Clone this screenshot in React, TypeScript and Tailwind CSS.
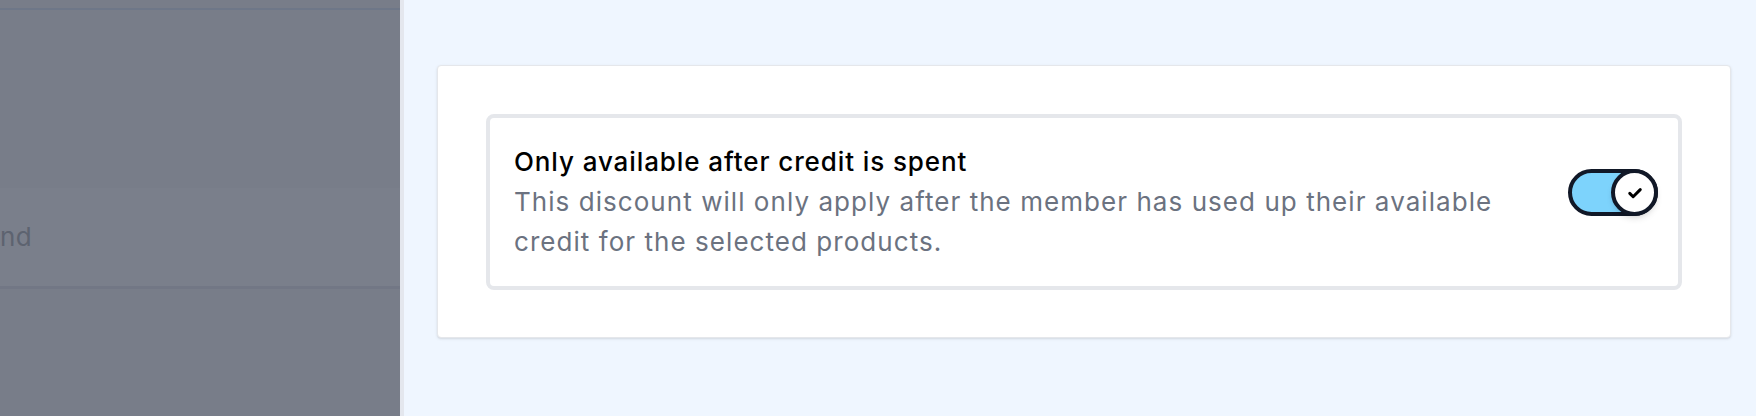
import React from 'react';

function Toggle({ on }: { on: boolean }) {
  return (
    <div
      className={`relative w-[90px] h-[47px] rounded-full border-4 border-[#111827] shrink-0 ${
        on ? 'bg-[#7dd3fc]' : 'bg-gray-200'
      }`}
    >
      <div className="absolute -right-[4px] -top-[4px] w-[47px] h-[47px] rounded-full border-4 border-[#111827] bg-white shadow-md flex items-center justify-center">
        <svg className="w-[18px] h-[18px]" viewBox="0 0 24 24" fill="none" stroke="#000" strokeWidth={4} strokeLinecap="round" strokeLinejoin="round">
          <path d="M5 12.5l4.5 4.5L19 7.5" />
        </svg>
      </div>
    </div>
  );
}

export default function App() {
  const [enabled] = React.useState(true);

  return (
    <div className="flex w-full h-[416px] overflow-hidden font-['Inter',sans-serif]">
      {/* Dimmed sidebar behind the overlay */}
      <div className="w-[400px] shrink-0 bg-[#787d89] flex flex-col">
        <div className="h-[10px] border-b-2 border-[#6e7788]" />
        <div className="h-[178px]" />
        <div className="h-[101px] bg-[#7a7f8b] border-b-[3px] border-[#727785] flex items-center">
          <span className="text-[26px] text-[#5d6370] leading-none tracking-[0.5px]">nd</span>
        </div>
      </div>
      <div className="w-[4px] shrink-0 bg-[#e4e7ee]" />

      {/* Main panel */}
      <div className="flex-1 bg-[#eff6ff] pl-[33px] pt-[65px] pr-[25px]">
        <div className="h-[273px] bg-white border border-[#e5e7eb] rounded-[4px] shadow-sm p-12">
          <div className="flex items-start justify-between border-4 border-[#e5e7eb] rounded-lg p-6 pr-[20px]">
            <div className="flex flex-col leading-[40px]">
              <span className="text-[26px] font-medium text-black tracking-[0.9px]">
                Only available after credit is spent
              </span>
              <span className="text-[26px] text-[#6b7280] tracking-[1.05px] max-w-[1020px]">
                This discount will only apply after the member has used up their available credit for the selected products.
              </span>
            </div>
            <div className="mt-[27px]">
              <Toggle on={enabled} />
            </div>
          </div>
        </div>
      </div>
    </div>
  );
}
